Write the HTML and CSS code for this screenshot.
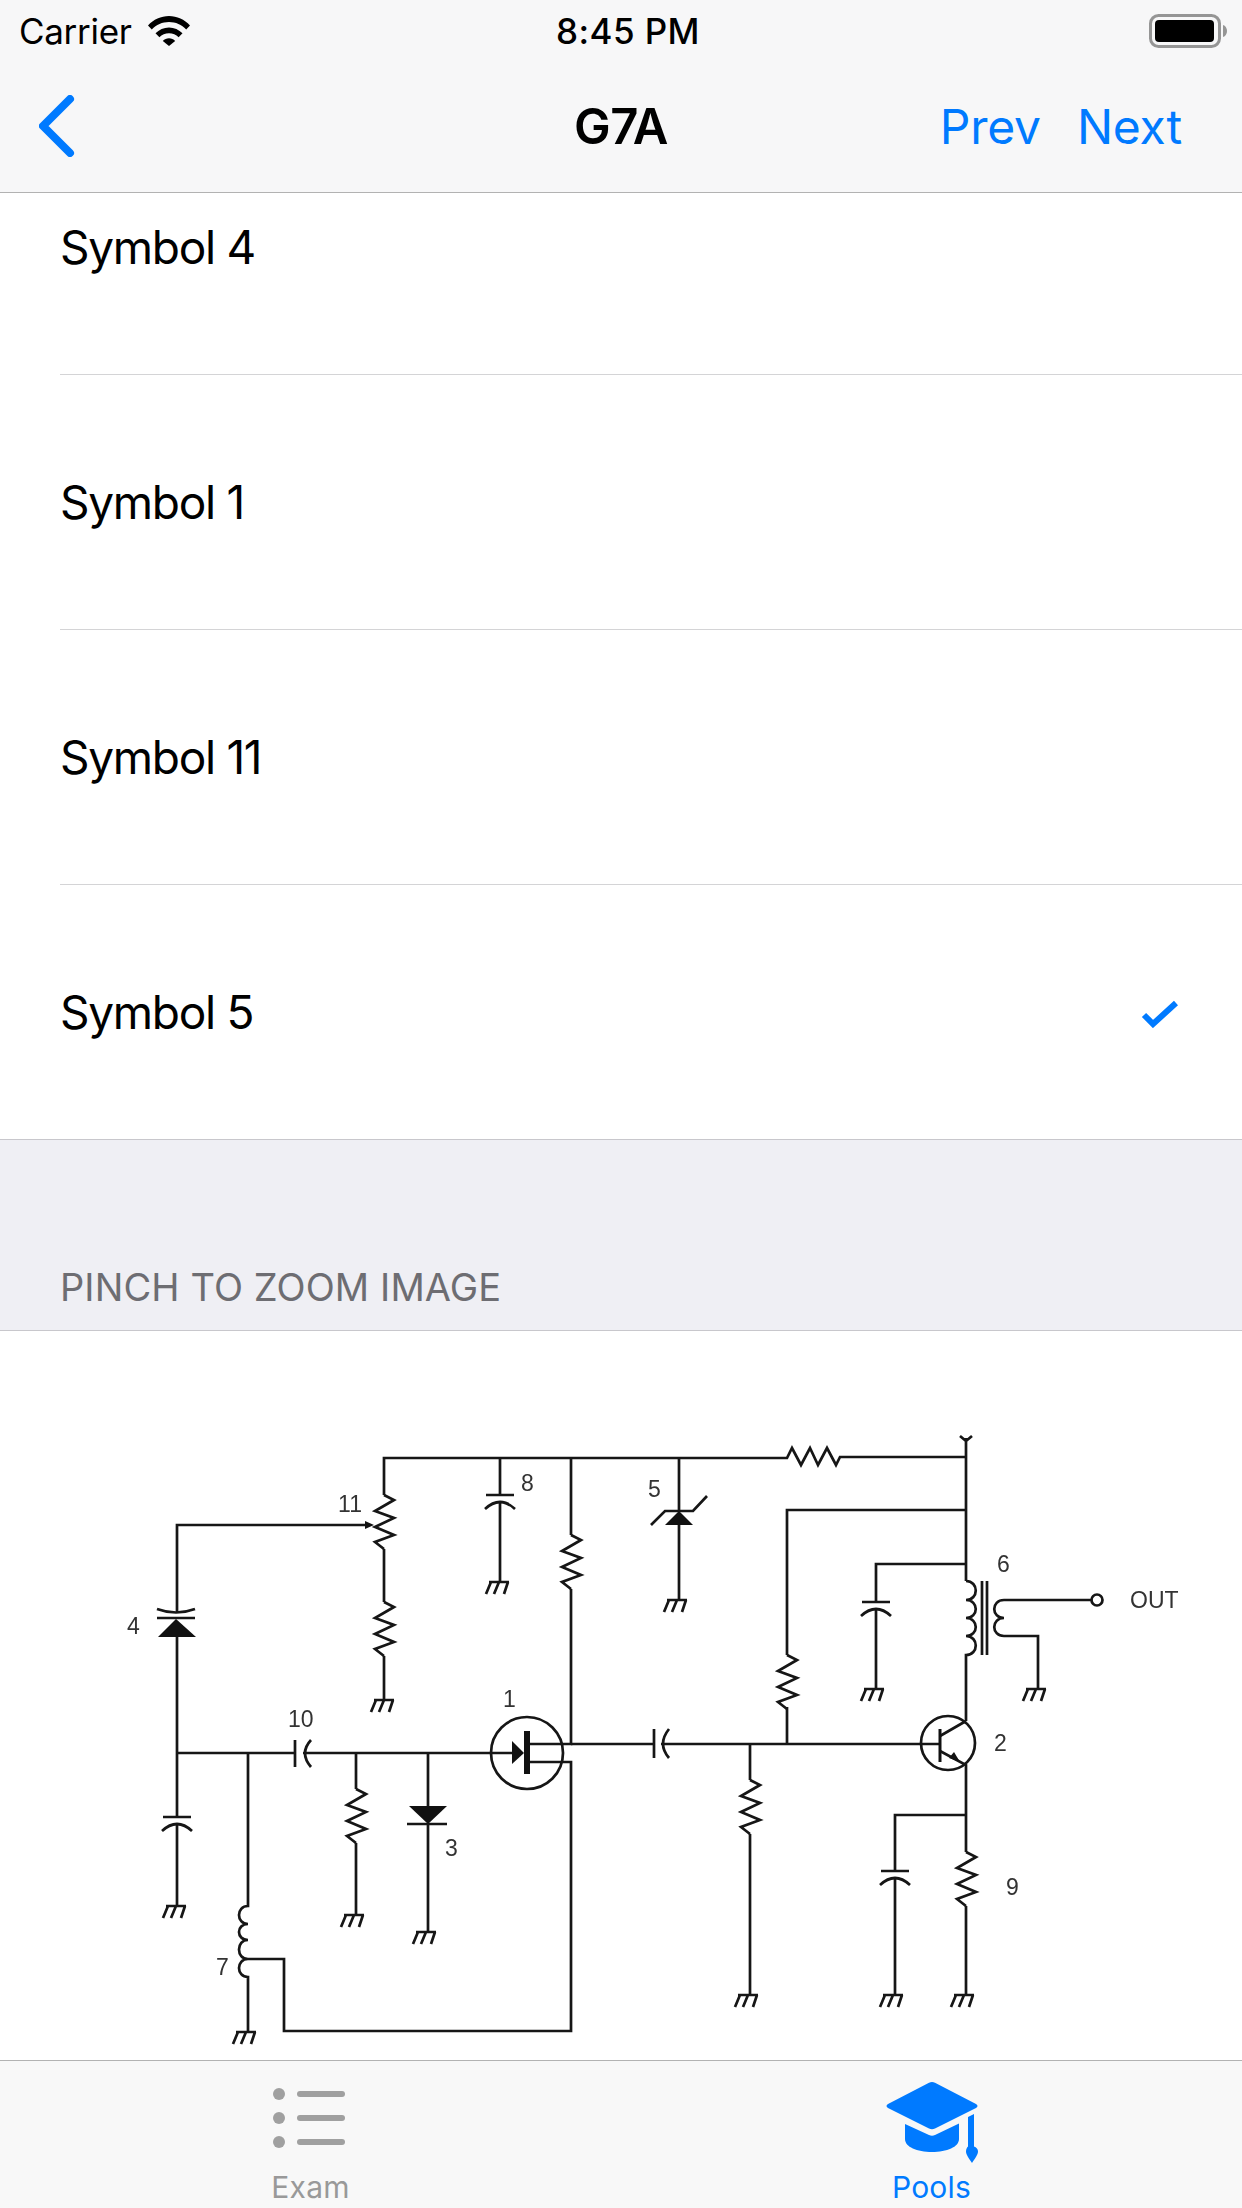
FILE: index.html
```html
<!DOCTYPE html>
<html lang="en">
<head>
<meta charset="utf-8">
<title>G7A</title>
<link rel="stylesheet" href="styles.css">
</head>
<body>
<div class="screen">
  <header class="top">
    <div class="status">
      <div class="status-left">
        <span class="carrier">Carrier</span>
        <svg class="wifi" viewBox="0 0 42 30" width="42" height="30"><path d="M0 9.5C5.5 3.5 13 0 21 0s15.500 3.500 21 9.500l-3.800 4C33.700 8.700 27.700 6 21 6S8.300 8.700 3.800 13.500z"/><path d="M7.500 17.300C11 13.600 15.800 11.400 21 11.400s10 2.200 13.500 5.900l-3.900 4C28.100 18.700 24.700 17.200 21 17.200s-7.100 1.500-9.600 4.100z"/><path d="M14.800 24.900c1.600-1.700 3.800-2.700 6.200-2.700s4.600 1 6.200 2.700L21 30z"/></svg>
      </div>
      <span class="time">8:45 PM</span>
      <svg class="battery" viewBox="0 0 78 34" width="78" height="34"><rect x="1.500" y="1.500" width="69" height="31" rx="8" class="battery-shell"/><rect x="6" y="6" width="59" height="22" rx="4"/><path d="M74 11c2.500 .8 4 3 4 6s-1.500 5.200-4 6z" class="battery-nub"/></svg>
    </div>
    <nav class="nav">
      <svg class="back" viewBox="0 0 36 62" width="36" height="62"><path d="M31 4 4 31l27 27"/></svg>
      <h1 class="title">G7A</h1>
      <div class="nav-actions"><span>Prev</span><span>Next</span></div>
    </nav>
  </header>

  <main class="content">
    <ul class="list">
      <li class="row row-scrolled"><span>Symbol 4</span></li>
      <li class="row"><span>Symbol 1</span></li>
      <li class="row"><span>Symbol 11</span></li>
      <li class="row row-last"><span>Symbol 5</span>
        <svg class="check" viewBox="0 0 38 28" width="38" height="28"><path d="M4 15 13 24 36 3"/></svg>
      </li>
    </ul>
    <div class="section-head"><span>PINCH TO ZOOM IMAGE</span></div>
    <div class="diagram">
      <svg class="circuit" viewBox="0 1331 1242 729" width="1242" height="729">
        <defs>
          <path id="res" d="M0 0 10 5-9 16 10 23-9 32 10 40-9 47 0 54"/>
          <path id="gnd" d="M-10 0H10M-8 0-13 12M0 0-5 12M9 0 5 12"/>
          <path id="cap" d="M-14 0H14M-15 14Q0 0 15 14"/>
        </defs>
        <g class="wires">
          <!-- top rail -->
          <path d="M384 1495V1458H787L792 1448 801 1465 810 1448 818 1465 827 1448 836 1465 840 1457H966"/>
          <use href="#res" x="384" y="1495"/>
          <path d="M384 1549V1602"/>
          <use href="#res" x="384" y="1602"/>
          <path d="M384 1656V1700"/>
          <use href="#gnd" x="384" y="1700"/>
          <!-- wiper and varactor -->
          <path d="M368 1525H177V1613M177 1637V1817"/>
          <path d="M157 1609Q176 1616 195 1609M157 1618H195"/>
          <path d="M177 1824V1906"/>
          <use href="#cap" x="177" y="1817"/>
          <use href="#gnd" x="176" y="1906"/>
          <!-- gate line -->
          <path d="M177 1753H295M295 1740V1767M311 1740Q299 1753 311 1767M303 1753H513"/>
          <path d="M248 1753V1906C236 1906 236 1924 248 1924 236 1924 236 1940 248 1940 236 1940 236 1959 248 1959 236 1959 236 1977 248 1977V2031"/>
          <use href="#gnd" x="246" y="2032"/>
          <path d="M248 1959H284V2031H571V1762H529"/>
          <path d="M356 1753V1789"/>
          <use href="#res" x="356" y="1789"/>
          <path d="M356 1843V1915"/>
          <use href="#gnd" x="354" y="1915"/>
          <path d="M428 1753V1806M428 1824V1932M407 1824H447"/>
          <use href="#gnd" x="426" y="1932"/>
          <!-- cap 8 -->
          <path d="M500 1458V1495M500 1502V1582"/>
          <use href="#cap" x="500" y="1495"/>
          <use href="#gnd" x="499" y="1582"/>
          <!-- drain branch -->
          <path d="M571 1457V1535"/>
          <use href="#res" x="571" y="1535"/>
          <path d="M571 1589V1744H529"/>
          <circle cx="527" cy="1753" r="36"/>
          <!-- coupling -->
          <path d="M571 1744H654M654 1729V1758M669 1729Q657 1744 669 1758M661 1744H940"/>
          <path d="M750 1744V1780"/>
          <use href="#res" x="750" y="1780"/>
          <path d="M750 1834V1995"/>
          <use href="#gnd" x="748" y="1995"/>
          <path d="M787 1744V1707"/>
          <use href="#res" x="787" y="1655"/>
          <path d="M787 1655V1510H966"/>
          <!-- zener -->
          <path d="M679 1457V1511M679 1525V1600M651 1525 665 1511H693L707 1496"/>
          <use href="#gnd" x="677" y="1600"/>
          <!-- main rail -->
          <path d="M966 1438V1581M960 1436 966 1441 972 1436"/>
          <path d="M966 1564H876V1602M876 1609V1689"/>
          <use href="#cap" x="876" y="1602"/>
          <use href="#gnd" x="874" y="1689"/>
          <path d="M966 1581C979 1581 979 1600 966 1600 979 1600 979 1618 966 1618 979 1618 979 1636 966 1636 979 1636 979 1655 966 1655V1721"/>
          <path d="M982 1581V1655M987 1581V1655"/>
          <path d="M1091 1600H1004C991 1600 991 1618 1004 1618 991 1618 991 1636 1004 1636H1038V1689"/>
          <use href="#gnd" x="1036" y="1689"/>
          <circle cx="1097" cy="1600" r="5.500"/>
          <!-- transistor -->
          <circle cx="948" cy="1743" r="27"/>
          <path d="M940 1736 966 1721M940 1751 966 1765V1852"/>
          <path d="M966 1815H895V1871M895 1878V1995"/>
          <use href="#cap" x="895" y="1871"/>
          <use href="#gnd" x="893" y="1995"/>
          <use href="#res" x="966" y="1852"/>
          <path d="M966 1906V1995"/>
          <use href="#gnd" x="964" y="1995"/>
        </g>
        <g class="solid">
          <path d="M374 1525 365 1521V1529Z"/>
          <path d="M176 1619 196 1637H158Z"/>
          <path d="M409 1806H447L428 1824Z"/>
          <path d="M679 1511 693 1525H665Z"/>
          <path d="M512 1741 524 1753 512 1764Z"/>
          <path d="M524 1731H530V1774H524Z"/>
          <path d="M938.500 1729H941.500V1762H938.500Z"/>
          <path d="M960 1762 949 1758 954 1752Z"/>
        </g>
        <g class="labels">
          <text x="350" y="1512" text-anchor="middle">11</text>
          <text x="521" y="1491">8</text>
          <text x="127" y="1634">4</text>
          <text x="503" y="1707">1</text>
          <text x="288" y="1727">10</text>
          <text x="445" y="1856">3</text>
          <text x="216" y="1975">7</text>
          <text x="648" y="1497">5</text>
          <text x="997" y="1572">6</text>
          <text x="1130" y="1608">OUT</text>
          <text x="994" y="1751">2</text>
          <text x="1006" y="1895">9</text>
        </g>
      </svg>
    </div>
  </main>

  <footer class="tabs">
    <div class="tab">
      <svg class="tab-icon" viewBox="0 0 76 60" width="76" height="60"><g class="exam-icon"><circle cx="6" cy="12" r="6"/><circle cx="6" cy="36" r="6"/><circle cx="6" cy="60" r="6"/><rect x="24" y="9" width="48" height="6" rx="3"/><rect x="24" y="33" width="48" height="6" rx="3"/><rect x="24" y="57" width="48" height="6" rx="3"/></g></svg>
      <span class="tab-label">Exam</span>
    </div>
    <div class="tab tab-active">
      <svg class="tab-icon" viewBox="0 2 92 84" width="92" height="84"><path d="M46 2c1 0 2 .3 3 .8l41 21.200c2 1 2 3 0 4L49 48.500c-2 1-4 1-6 0L2 28c-2-1-2-3 0-4L43 2.800c1-.5 2-.8 3-.8z"/><path d="M19 44 43 55c2 1 4 1 6 0l24-11.500V59c0 8-12 13-27 13s-27-5-27-13z"/><path d="M82 37l6-3v32.500c2.500 1 4 2.500 4 5 0 3-3 7-6 11.500-3-4.500-6-8.500-6-11.500 0-2.500 1-4 2-5z"/></svg>
      <span class="tab-label">Pools</span>
    </div>
  </footer>
</div>
</body>
</html>
```

FILE: styles.css
```css
* { box-sizing: border-box; margin: 0; padding: 0; }
html, body { width: 1242px; height: 2208px; overflow: hidden; background: #fff; }
body { font-family: Inter, "Liberation Sans", sans-serif; color: #000; }

.screen { width: 1242px; height: 2208px; display: flex; flex-direction: column; }

.top { height: 193px; flex: none; background: #f7f7f8; border-bottom: 1px solid #b2b2b2; }
.status { height: 60px; display: grid; grid-template-columns: 1fr auto 1fr; align-items: center; padding: 1px 15px 0 19px; }
.status-left { display: flex; align-items: center; gap: 16px; }
.carrier { font-size: 35px; letter-spacing: -0.3px; }
.wifi { fill: #000; }
.time { font-size: 35px; font-weight: 500; letter-spacing: 0.4px; margin-left: 10px; }
.battery { justify-self: end; fill: #000; }
.battery-shell { fill: none; stroke: #959595; stroke-width: 3; }
.battery-nub { fill: #959595; }

.nav { height: 132px; display: grid; grid-template-columns: 1fr auto 1fr; align-items: center; padding: 0 60px; }
.back { fill: none; stroke: #007aff; stroke-width: 8; stroke-linecap: round; stroke-linejoin: round; margin-left: -21px; }
.title { font-size: 49px; font-weight: 600; letter-spacing: -0.4px; }
.nav-actions { justify-self: end; display: flex; gap: 36px; font-size: 48px; color: #007aff; letter-spacing: -0.2px; }

.content { flex: 1; display: flex; flex-direction: column; min-height: 0; }
.list { list-style: none; flex: none; }
.row { height: 255px; margin-left: 60px; padding-right: 64px; display: flex; align-items: center; justify-content: space-between; border-bottom: 1px solid #d4d4d6; font-size: 46px; letter-spacing: -1.3px; }
.row-scrolled { height: 182px; padding-bottom: 73px; }
.row-last { height: 254px; border-bottom: 0; }
.check { fill: none; stroke: #007aff; stroke-width: 6; margin-top: 4px; }

.section-head { height: 192px; flex: none; background: #efeff4; border-top: 1px solid #c8c7cc; border-bottom: 1px solid #c8c7cc; display: flex; align-items: flex-end; padding: 0 0 21px 60px; font-size: 38px; letter-spacing: 0.1px; color: #6d6d72; line-height: 44px; }

.diagram { flex: 1; background: #fff; min-height: 0; overflow: hidden; }
.circuit { display: block; filter: blur(0.4px); }
.wires { fill: none; stroke: #161616; stroke-width: 2.700; }
.solid { fill: #111; }
.labels { font-family: "Liberation Sans", Arial, sans-serif; font-size: 23px; fill: #333; }

.tabs { height: 148px; flex: none; background: #f8f8f8; border-top: 1px solid #b2b2b2; display: flex; }
.tab { flex: 1; position: relative; display: flex; flex-direction: column; align-items: center; justify-content: flex-end; padding-bottom: 3px; color: #999; }
.tab-icon { position: absolute; top: 21px; left: 50%; transform: translateX(-50%); overflow: visible; fill: currentColor; }
.tab-active { color: #007aff; }
.tab-label { font-size: 30px; line-height: 36px; letter-spacing: 0.2px; }
.exam-icon { fill: #a0a0a0; }
```
